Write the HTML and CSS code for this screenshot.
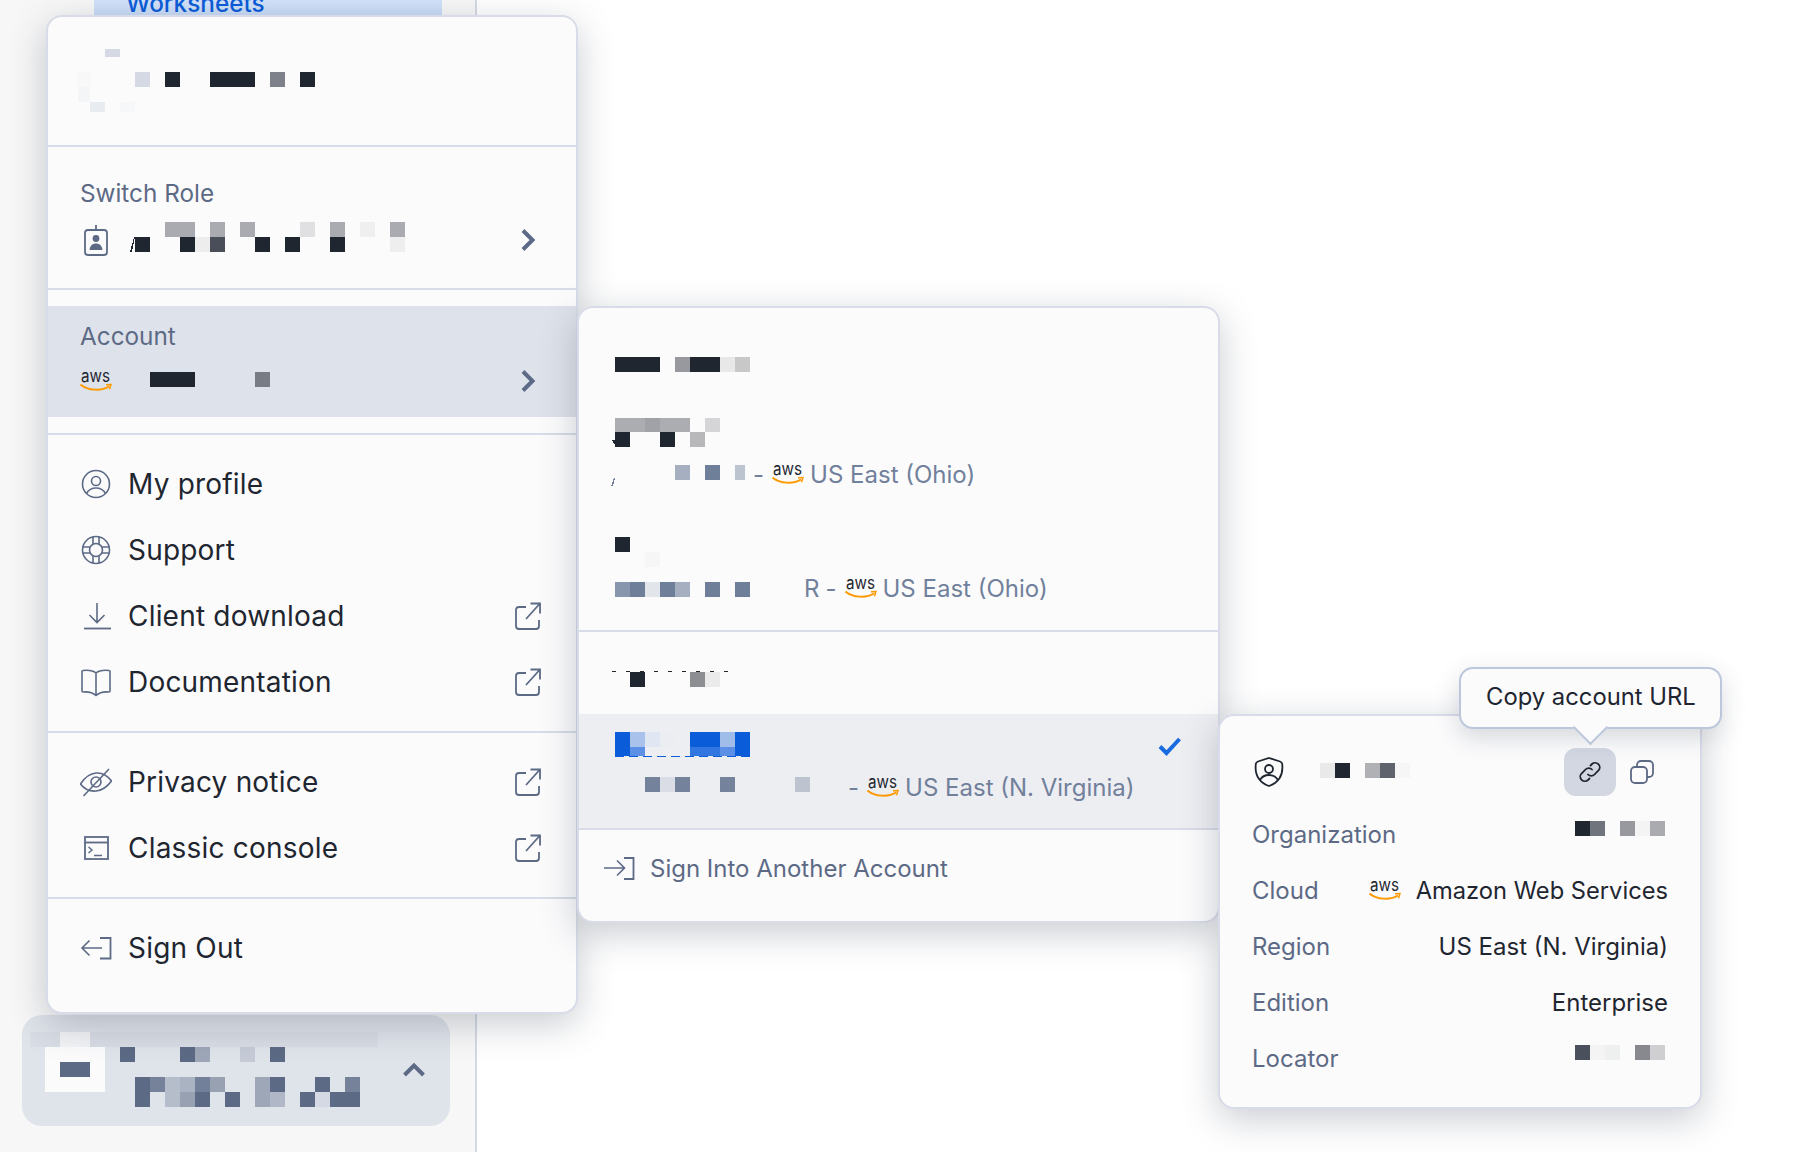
FILE: index.html
```html
<!DOCTYPE html>
<html lang="en">
<head>
    <meta charset="UTF-8">
    <meta name="viewport" content="width=device-width, initial-scale=1.0">
    <link rel="stylesheet" href="styles.css">
    <title>Account menu</title>
</head>
<body>

<svg class="defs" width="0" height="0">
    <symbol id="aws" viewBox="0 0 32 22">
        <text x="1" y="12" font-family="Inter, sans-serif" font-size="18" textLength="29" lengthAdjust="spacingAndGlyphs" fill="#1f2630">aws</text>
        <path d="M0.500 14.500C8 20.500 21 21.500 29 16.500" fill="none" stroke="#f90" stroke-width="2"/>
        <path d="M26 14.800l5-.3-1.500 4.800" fill="none" stroke="#f90" stroke-width="1.500"/>
    </symbol>
    <symbol id="external" viewBox="0 0 26 28">
        <path d="M11 5H4a3 3 0 0 0-3 3v16a3 3 0 0 0 3 3h17a3 3 0 0 0 3-3v-6" fill="none" stroke="currentColor" stroke-width="1.800"/>
        <path d="M11 17L24.500 2M15.500 1.500h9.500v10" fill="none" stroke="currentColor" stroke-width="1.800"/>
    </symbol>
    <symbol id="chevron" viewBox="0 0 16 24">
        <path d="M3 2.500L12.500 12L3 21.500" fill="none" stroke="currentColor" stroke-width="4"/>
    </symbol>
</svg>

<aside class="sidebar">
    <div class="nav-item"><span>Worksheets</span></div>
    <div class="sidebar-footer">
        <svg class="mosaic" width="348" height="75" viewBox="30 1032 348 75">
            <rect x="30" y="1032" width="30" height="15" fill="#d9dde5"/>
            <rect x="60" y="1032" width="30" height="15" fill="#f2f3f5"/>
            <rect x="90" y="1032" width="288" height="15" fill="#d8dce4"/>
            <rect x="45" y="1047" width="60" height="45" fill="#fbfbfc"/>
            <rect x="60" y="1062" width="30" height="15" fill="#5d6a85"/>
            <rect x="120" y="1047" width="15" height="15" fill="#5d6a85"/>
            <rect x="180" y="1047" width="15" height="15" fill="#5d6a85"/>
            <rect x="195" y="1047" width="15" height="15" fill="#9ea7b8"/>
            <rect x="240" y="1047" width="15" height="15" fill="#c6cbd7"/>
            <rect x="270" y="1047" width="15" height="15" fill="#5d6a85"/>
            <rect x="135" y="1077" width="15" height="30" fill="#5d6a85"/>
            <rect x="150" y="1077" width="15" height="15" fill="#76829a"/>
            <rect x="165" y="1077" width="15" height="30" fill="#b5bcca"/>
            <rect x="180" y="1077" width="15" height="15" fill="#aab3c1"/>
            <rect x="195" y="1077" width="15" height="15" fill="#72809a"/>
            <rect x="210" y="1077" width="15" height="15" fill="#98a1b2"/>
            <rect x="255" y="1077" width="15" height="30" fill="#9ea7b8"/>
            <rect x="270" y="1077" width="15" height="15" fill="#5d6a85"/>
            <rect x="315" y="1077" width="15" height="15" fill="#5d6a85"/>
            <rect x="345" y="1077" width="15" height="15" fill="#76829a"/>
            <rect x="180" y="1092" width="15" height="15" fill="#98a1b2"/>
            <rect x="195" y="1092" width="15" height="15" fill="#5d6a85"/>
            <rect x="225" y="1092" width="15" height="15" fill="#5d6a85"/>
            <rect x="270" y="1092" width="15" height="15" fill="#b0b8c7"/>
            <rect x="300" y="1092" width="15" height="15" fill="#5d6a85"/>
            <rect x="315" y="1092" width="15" height="15" fill="#d5d9e3"/>
            <rect x="330" y="1092" width="30" height="15" fill="#5d6a85"/>
        </svg>
        <svg class="footer-chevron" width="24" height="16" viewBox="0 0 24 16">
            <path d="M2.500 13L12 3.500L21.500 13" fill="none" stroke="currentColor" stroke-width="4"/>
        </svg>
    </div>
</aside>

<div class="panel main-menu">
    <section class="user-head">
        <svg class="mosaic" width="240" height="65" viewBox="75 48 240 65">
            <rect x="105" y="49" width="15" height="8" fill="#d5d9e4"/>
            <rect x="78" y="72" width="12" height="15" fill="#f8f8f9"/>
            <rect x="78" y="87" width="12" height="15" fill="#f4f5f6"/>
            <rect x="90" y="102" width="15" height="10" fill="#e8ebf0"/>
            <rect x="120" y="102" width="15" height="10" fill="#f6f7f8"/>
            <rect x="135" y="72" width="15" height="15" fill="#d5d9e4"/>
            <rect x="165" y="72" width="15" height="15" fill="#1f2630"/>
            <rect x="210" y="72" width="45" height="15" fill="#1f2630"/>
            <rect x="270" y="72" width="15" height="15" fill="#7e8189"/>
            <rect x="300" y="72" width="15" height="15" fill="#1f2630"/>
        </svg>
    </section>

    <section class="picker picker-role">
        <div class="picker-label">Switch Role</div>
        <div class="picker-value">
            <svg class="row-icon" width="32" height="32" viewBox="0 0 32 32">
                <rect x="5" y="6" width="22" height="25" rx="3" fill="none" stroke="#5d6a85" stroke-width="1.800"/>
                <path d="M16 1v5" stroke="#5d6a85" stroke-width="1.800"/>
                <circle cx="16" cy="14.500" r="3.400" fill="#5d6a85"/>
                <path d="M9.500 26c.6-4.500 3-6.500 6.500-6.500s5.900 2 6.500 6.500z" fill="#5d6a85"/>
            </svg>
            <svg class="mosaic role-mosaic" width="275" height="30" viewBox="130 222 275 30">
                <path d="M130 252l4-15h1l-3 15z" fill="#1f2630"/>
                <rect x="165" y="222" width="30" height="15" fill="#a9abb0"/>
                <rect x="210" y="222" width="15" height="15" fill="#a9abb0"/>
                <rect x="240" y="222" width="15" height="15" fill="#a9abb0"/>
                <rect x="300" y="222" width="15" height="15" fill="#e0e0e2"/>
                <rect x="330" y="222" width="15" height="15" fill="#a9abb0"/>
                <rect x="360" y="222" width="15" height="15" fill="#efefef"/>
                <rect x="390" y="222" width="15" height="15" fill="#a9abb0"/>
                <rect x="135" y="237" width="15" height="15" fill="#1f2630"/>
                <rect x="180" y="237" width="15" height="15" fill="#1f2630"/>
                <rect x="195" y="237" width="15" height="15" fill="#ededee"/>
                <rect x="210" y="237" width="15" height="15" fill="#4a4e58"/>
                <rect x="255" y="237" width="15" height="15" fill="#1f2630"/>
                <rect x="285" y="237" width="15" height="15" fill="#1f2630"/>
                <rect x="330" y="237" width="15" height="15" fill="#1f2630"/>
                <rect x="390" y="237" width="15" height="15" fill="#eeeeef"/>
            </svg>
            <svg class="chevron" width="16" height="24"><use href="#chevron"/></svg>
        </div>
    </section>

    <section class="account-section">
        <div class="picker picker-active">
            <div class="picker-label">Account</div>
            <div class="picker-value">
                <svg class="row-icon" width="32" height="22"><use href="#aws"/></svg>
                <svg class="mosaic account-mosaic" width="120" height="15" viewBox="150 372 120 15">
                    <rect x="150" y="372" width="45" height="15" fill="#1f2630"/>
                    <rect x="255" y="372" width="15" height="15" fill="#787c85"/>
                </svg>
                <svg class="chevron" width="16" height="24"><use href="#chevron"/></svg>
            </div>
        </div>
    </section>

    <section class="menu-group">
        <div class="menu-row">
            <svg class="row-icon" width="32" height="32" viewBox="0 0 32 32">
                <circle cx="16" cy="16" r="13.500" fill="none" stroke="#5d6a85" stroke-width="1.600"/>
                <circle cx="16" cy="13" r="4.500" fill="none" stroke="#5d6a85" stroke-width="1.600"/>
                <path d="M6.500 25.500c2-3.500 5.500-5.500 9.500-5.500s7.500 2 9.500 5.500" fill="none" stroke="#5d6a85" stroke-width="1.600"/>
            </svg>
            <span>My profile</span>
        </div>
        <div class="menu-row">
            <svg class="row-icon" width="32" height="32" viewBox="0 0 32 32" fill="none" stroke="#5d6a85" stroke-width="1.600">
                <circle cx="16" cy="16" r="13.500"/>
                <circle cx="16" cy="16" r="6.500"/>
                <path d="M13 3v7M19 3v7M13 22v7M19 22v7M3 13h7M3 19h7M22 13h7M22 19h7"/>
            </svg>
            <span>Support</span>
        </div>
        <div class="menu-row">
            <svg class="row-icon" width="32" height="32" viewBox="0 0 32 32" fill="none" stroke="#5d6a85" stroke-width="1.600">
                <path d="M17 3v19M9.500 15l7.500 7.500L24.500 15"/>
                <path d="M4 28.500h27" stroke-width="1.800"/>
            </svg>
            <span>Client download</span>
            <svg class="external" width="26" height="28"><use href="#external"/></svg>
        </div>
        <div class="menu-row">
            <svg class="row-icon" width="32" height="32" viewBox="0 0 32 32" fill="none" stroke="#5d6a85" stroke-width="1.600">
                <path d="M16 7c-3-2.500-8-3-13-2.500a1 1 0 0 0-1 1V25a1 1 0 0 0 1 1c5-.5 9 0 13 3.500 4-3.500 8-4 13-3.500a1 1 0 0 0 1-1V5.500a1 1 0 0 0-1-1C24 4 19 4.500 16 7zM16 7v22"/>
            </svg>
            <span>Documentation</span>
            <svg class="external" width="26" height="28"><use href="#external"/></svg>
        </div>
    </section>

    <section class="menu-group">
        <div class="menu-row">
            <svg class="row-icon" width="32" height="32" viewBox="0 0 32 32" fill="none" stroke="#5d6a85" stroke-width="1.600">
                <path d="M0.500 18C5 11 10 7.500 16 7s11 2 15.500 8C27 21 22 24.500 16 25S5 24 .5 18z"/>
                <circle cx="16" cy="16" r="5"/>
                <path d="M3.500 30L29 3"/>
            </svg>
            <span>Privacy notice</span>
            <svg class="external" width="26" height="28"><use href="#external"/></svg>
        </div>
        <div class="menu-row">
            <svg class="row-icon" width="32" height="32" viewBox="0 0 32 32" fill="none" stroke="#5d6a85" stroke-width="1.800">
                <rect x="5" y="5" width="23" height="22"/>
                <path d="M5 10.500h23"/>
                <path d="M8.500 15l3.500 3-3.500 3M14 23.500h8" stroke-width="1.500"/>
            </svg>
            <span>Classic console</span>
            <svg class="external" width="26" height="28"><use href="#external"/></svg>
        </div>
    </section>

    <section class="menu-group menu-group-last">
        <div class="menu-row">
            <svg class="row-icon" width="32" height="32" viewBox="0 0 32 32" fill="none" stroke="#5d6a85" stroke-width="1.600">
                <path d="M22 16H2M9.500 8.500L2 16l7.500 7.500"/>
                <path d="M20 6h10.500v20.500H20" stroke-width="1.800"/>
            </svg>
            <span>Sign Out</span>
        </div>
    </section>
</div>

<div class="panel account-menu">
    <section class="account-list">
        <svg class="mosaic first-org" width="135" height="15" viewBox="615 357 135 15">
            <rect x="615" y="357" width="45" height="15" fill="#1f2630"/>
            <rect x="675" y="357" width="15" height="15" fill="#97999e"/>
            <rect x="690" y="357" width="30" height="15" fill="#1f2630"/>
            <rect x="720" y="357" width="15" height="15" fill="#e8e8e9"/>
            <rect x="735" y="357" width="15" height="15" fill="#c8c8c9"/>
        </svg>
        <svg class="mosaic second-org" width="109" height="29" viewBox="611 418 109 29">
            <rect x="615" y="418" width="30" height="14" fill="#abadb1"/>
            <rect x="645" y="418" width="15" height="14" fill="#a0a2a7"/>
            <rect x="660" y="418" width="30" height="14" fill="#abadb1"/>
            <rect x="705" y="418" width="15" height="14" fill="#d5d5d7"/>
            <path d="M612 440h3v4h-1z" fill="#1f2630"/>
            <rect x="615" y="432" width="15" height="15" fill="#1f2630"/>
            <rect x="660" y="432" width="15" height="15" fill="#1f2630"/>
            <rect x="690" y="432" width="15" height="15" fill="#b8b8ba"/>
        </svg>
        <div class="cloud-line">
            <svg class="mosaic line-fragment" width="139" height="21" viewBox="611 462 139 21">
                <path d="M611 483l3-8h1l-2 8z" fill="#71809b"/>
                <rect x="675" y="462" width="15" height="15" fill="#a6afbf"/>
                <rect x="705" y="462" width="15" height="15" fill="#6f7f99"/>
                <rect x="735" y="462" width="10" height="15" fill="#bcc4d0"/>
            </svg>
            <span class="dash">-</span>
            <svg class="aws" width="32" height="22"><use href="#aws"/></svg>
            <span>US East (Ohio)</span>
        </div>
        <svg class="mosaic third-org" width="45" height="30" viewBox="615 537 45 30">
            <rect x="615" y="537" width="15" height="15" fill="#1f2630"/>
            <rect x="645" y="552" width="15" height="15" fill="#f6f6f6"/>
        </svg>
        <div class="cloud-line cloud-line-third">
            <svg class="mosaic" width="135" height="15" viewBox="615 582 135 15">
                <rect x="615" y="582" width="15" height="15" fill="#8896ad"/>
                <rect x="630" y="582" width="15" height="15" fill="#6f7f99"/>
                <rect x="645" y="582" width="15" height="15" fill="#e2e5ea"/>
                <rect x="660" y="582" width="15" height="15" fill="#6f7f99"/>
                <rect x="675" y="582" width="15" height="15" fill="#a6afbf"/>
                <rect x="705" y="582" width="15" height="15" fill="#6f7f99"/>
                <rect x="735" y="582" width="15" height="15" fill="#6f7f99"/>
            </svg>
            <span class="locator-end">R</span>
            <span class="dash">-</span>
            <svg class="aws" width="32" height="22"><use href="#aws"/></svg>
            <span>US East (Ohio)</span>
        </div>
    </section>

    <section class="account-current">
        <svg class="mosaic other-org" width="135" height="17" viewBox="612 670 135 17">
            <path d="M612 671h125" stroke="#1f2630" stroke-width="1" stroke-dasharray="4 10"/>
            <rect x="630" y="672" width="15" height="15" fill="#1f2630"/>
            <rect x="690" y="672" width="15" height="15" fill="#8c8e92"/>
            <rect x="705" y="672" width="15" height="15" fill="#ebebec"/>
        </svg>
        <div class="selected-org">
            <div>
                <svg class="mosaic" width="140" height="25" viewBox="615 732 140 25">
                    <rect x="615" y="732" width="15" height="24" fill="#0b5cd9"/>
                    <rect x="630" y="732" width="15" height="15" fill="#a8c2ec"/>
                    <rect x="630" y="747" width="15" height="9" fill="#5c90e6"/>
                    <rect x="645" y="732" width="15" height="15" fill="#e0e6f2"/>
                    <rect x="660" y="732" width="15" height="15" fill="#ebedf2"/>
                    <rect x="690" y="732" width="30" height="15" fill="#0b5cd9"/>
                    <rect x="690" y="747" width="30" height="9" fill="#3276df"/>
                    <rect x="720" y="732" width="15" height="15" fill="#a0bde9"/>
                    <rect x="720" y="747" width="15" height="9" fill="#5c90e6"/>
                    <rect x="735" y="732" width="15" height="24" fill="#0b5cd9"/>
                    <path d="M615 756.500h137" stroke="#0b5cd9" stroke-width="1" stroke-dasharray="9 5"/>
                </svg>
                <div class="cloud-line cloud-line-selected">
                    <svg class="mosaic" width="195" height="15" viewBox="615 777 195 15">
                        <rect x="645" y="777" width="15" height="15" fill="#74829b"/>
                        <rect x="660" y="777" width="15" height="15" fill="#dadde6"/>
                        <rect x="675" y="777" width="15" height="15" fill="#74829b"/>
                        <rect x="720" y="777" width="15" height="15" fill="#74829b"/>
                        <rect x="795" y="777" width="15" height="15" fill="#bdc4d0"/>
                    </svg>
                    <span class="dash dash-selected">-</span>
                    <svg class="aws" width="32" height="22"><use href="#aws"/></svg>
                    <span>US East (N. Virginia)</span>
                </div>
            </div>
            <svg class="check" width="24" height="20" viewBox="0 0 24 20">
                <path d="M2 10.500L8.500 17L21.500 3" fill="none" stroke="#1a6be0" stroke-width="4"/>
            </svg>
        </div>
    </section>

    <section class="sign-into">
        <svg width="32" height="24" viewBox="0 0 32 24" fill="none" stroke="#5d6a85" stroke-width="1.600">
            <path d="M1 12h20M14 4.500l7.500 7.500L14 19.500"/>
            <path d="M21 2h9.500v21H21" stroke-width="1.800"/>
        </svg>
        <span>Sign Into Another Account</span>
    </section>
</div>

<div class="panel detail-card">
    <div class="detail-head">
        <svg class="shield" width="32" height="32" viewBox="0 0 32 32" fill="none" stroke="#1f2630" stroke-width="1.800">
            <path d="M16 2l11 3.500c1.500.5 2 1 2.200 2.500 1 9-1 17.500-13.200 22C3.800 25.500 1.800 17 2.800 8 3 6.500 3.500 6 5 5.500z"/>
            <circle cx="16" cy="13" r="4"/>
            <path d="M7 24c2-3.500 5-5 9-5s7 1.500 9 5"/>
        </svg>
        <svg class="mosaic head-mosaic" width="90" height="15" viewBox="1320 762 90 15">
            <rect x="1320" y="762" width="15" height="15" fill="#e9e9ea"/>
            <rect x="1335" y="762" width="15" height="15" fill="#1f2630"/>
            <rect x="1365" y="762" width="15" height="15" fill="#b0b1b5"/>
            <rect x="1380" y="762" width="15" height="15" fill="#5f636c"/>
            <rect x="1395" y="762" width="15" height="15" fill="#f6f6f6"/>
        </svg>
        <button class="icon-button">
            <svg width="24" height="24" viewBox="0 0 24 24" fill="none" stroke="#1f2630" stroke-width="1.800" stroke-linecap="round">
                <path d="M10 14.500a4.500 4.500 0 0 0 6.500 0l4-4a4.600 4.600 0 0 0-6.500-6.500l-1.500 1.500"/>
                <path d="M14 9.500a4.500 4.500 0 0 0-6.500 0l-4 4a4.600 4.600 0 0 0 6.500 6.500l1.500-1.500"/>
            </svg>
        </button>
        <svg class="copy-icon" width="24" height="24" viewBox="0 0 24 24" fill="none" stroke="#5d6a85" stroke-width="1.800">
            <rect x="1" y="7" width="16" height="16" rx="4"/>
            <path d="M7 7V5a4 4 0 0 1 4-4h8a4 4 0 0 1 4 4v8a4 4 0 0 1-4 4h-2"/>
        </svg>
    </div>
    <div class="detail-row">
        <span class="detail-label">Organization</span>
        <svg class="mosaic detail-mosaic" width="90" height="15" viewBox="1575 822 90 15">
            <rect x="1575" y="822" width="15" height="15" fill="#1f2630"/>
            <rect x="1590" y="822" width="15" height="15" fill="#70747d"/>
            <rect x="1620" y="822" width="15" height="15" fill="#97999e"/>
            <rect x="1635" y="822" width="15" height="15" fill="#f4f4f5"/>
            <rect x="1650" y="822" width="15" height="15" fill="#a9abaf"/>
        </svg>
    </div>
    <div class="detail-row">
        <span class="detail-label">Cloud</span>
        <span class="detail-cloud">
            <svg width="32" height="22"><use href="#aws"/></svg>
            <span class="cloud-name">Amazon Web Services</span>
        </span>
    </div>
    <div class="detail-row">
        <span class="detail-label">Region</span>
        <span>US East (N. Virginia)</span>
    </div>
    <div class="detail-row">
        <span class="detail-label">Edition</span>
        <span>Enterprise</span>
    </div>
    <div class="detail-row">
        <span class="detail-label">Locator</span>
        <svg class="mosaic detail-mosaic" width="90" height="15" viewBox="1575 1047 90 15">
            <rect x="1575" y="1047" width="15" height="15" fill="#4b515c"/>
            <rect x="1590" y="1047" width="15" height="15" fill="#f4f4f5"/>
            <rect x="1605" y="1047" width="15" height="15" fill="#eeefef"/>
            <rect x="1635" y="1047" width="15" height="15" fill="#87898f"/>
            <rect x="1650" y="1047" width="15" height="15" fill="#cfcfd1"/>
        </svg>
    </div>
</div>

<div class="tooltip">Copy account URL</div>

</body>
</html>
```

FILE: styles.css
```css
* {
    box-sizing: border-box;
}

body {
    margin: 0;
    height: 1152px;
    overflow: hidden;
    background-color: #fff;
    font-family: Inter, "Noto Sans", sans-serif;
    color: #1f2630;
}

.defs {
    position: absolute;
}

.mosaic {
    display: block;
    flex: none;
    shape-rendering: crispEdges;
}

/* sidebar behind the menus */
.sidebar {
    display: flex;
    flex-direction: column;
    justify-content: space-between;
    width: 477px;
    height: 1152px;
    padding: 0 25px 26px 22px;
    background-color: #f7f7f7;
    border-right: 2px solid #d5d9e4;
}

.nav-item {
    display: flex;
    align-items: flex-end;
    width: 348px;
    height: 16px;
    margin-left: 72px;
    padding-left: 32px;
    overflow: hidden;
    background: linear-gradient(#d3e3fa, #c8daf5);
    color: #0b5cd9;
    font-size: 24.300px;
    font-weight: 500;
}

.nav-item span {
    flex: none;
    line-height: 30px;
    margin-bottom: -2px;
}

.sidebar-footer {
    display: flex;
    align-items: center;
    justify-content: space-between;
    height: 111px;
    padding: 17px 24px 19px 8px;
    background-color: #dfe3ea;
    border-radius: 20px;
}

.footer-chevron {
    color: #5d6a85;
}

/* floating panels */
.panel {
    position: absolute;
    background-color: #fbfbfc;
    border: 2px solid #d8dce8;
    border-radius: 16px;
    box-shadow: 0 10px 36px rgba(40, 50, 70, 0.25);
}

.main-menu {
    left: 46px;
    top: 15px;
    width: 532px;
    height: 999px;
}

.main-menu section {
    border-bottom: 2px solid #d8dce8;
}

.user-head {
    height: 130px;
    padding: 31px 0 0 27px;
}

.picker {
    padding-top: 31px;
    height: 143px;
}

.picker-role {
    padding-top: 30px;
}

.picker-active {
    height: 111px;
    padding-top: 14px;
    background-color: #dee2ea;
}

.account-section {
    height: 145px;
    padding-top: 16px;
}

.picker-label {
    padding-left: 32px;
    color: #5d6a85;
    font-size: 24.300px;
    line-height: 32px;
}

.picker-value {
    display: flex;
    align-items: center;
    height: 40px;
    margin-top: 11px;
    padding: 0 40px 0 32px;
}

.picker-active .picker-value {
    margin-top: 9px;
}

.row-icon {
    flex: none;
}

.role-mosaic {
    margin: -6px 0 0 18px;
}

.account-mosaic {
    margin: -3px 0 0 38px;
}

.chevron {
    margin-left: auto;
    color: #5d6a85;
}

.menu-group {
    padding: 16px 0;
}

.menu-group-last {
    padding: 16px 0 0;
    border-bottom: 0 !important;
}

.menu-row {
    display: flex;
    align-items: center;
    gap: 16px;
    height: 66px;
    padding: 0 35px 0 32px;
    font-size: 28px;
    letter-spacing: 0.2px;
}

.external {
    margin-left: auto;
    color: #5d6a85;
}

/* account list panel */
.account-menu {
    left: 577px;
    top: 306px;
    width: 643px;
    height: 617px;
    z-index: 1;
}

.account-menu section {
    padding-left: 36px;
}

.account-list {
    height: 324px;
    padding-top: 49px;
    border-bottom: 2px solid #d8dce8;
}

.first-org {
    margin-bottom: 46px;
}

.second-org {
    margin-left: -4px;
}

.cloud-line {
    display: flex;
    align-items: center;
    height: 30px;
    margin: 12px 0 48px;
    color: #71809b;
    font-size: 24px;
}

.cloud-line .mosaic {
    margin-top: -9px;
}

.cloud-line .line-fragment {
    margin: 3px 0 0 -4px;
}

.cloud-line .aws {
    margin: 0 6px 0 8px;
}

.dash {
    margin-left: 3px;
}

.cloud-line-third {
    margin: 6px 0 0;
}

.cloud-line-third .mosaic {
    margin-top: 3px;
}

.locator-end {
    margin-left: 54px;
}

.cloud-line-third .dash {
    margin-left: 6px;
}

.account-current {
    height: 198px;
    padding-top: 38px;
    padding-left: 0 !important;
    border-bottom: 2px solid #d8dce8;
}

.other-org {
    margin-left: 33px;
    margin-bottom: 27px;
}

.selected-org {
    display: flex;
    justify-content: space-between;
    height: 114px;
    padding: 18px 36px 0 36px;
    background-color: #edeef2;
}

.cloud-line-selected {
    margin: 15px 0 0;
}

.cloud-line-selected .mosaic {
    margin-top: -5px;
}

.dash-selected {
    margin-left: 38px;
}

.check {
    margin-top: 4px;
}

.sign-into {
    display: flex;
    align-items: center;
    gap: 15px;
    height: 76px;
    padding-left: 24px !important;
    color: #5d6a85;
    font-size: 24px;
}

/* account details card */
.detail-card {
    left: 1218px;
    top: 714px;
    width: 484px;
    height: 395px;
    padding: 32px 32px 0;
    font-size: 24px;
    z-index: 2;
}

.detail-head {
    display: flex;
    align-items: center;
    height: 48px;
    margin-bottom: 10px;
}

.shield {
    margin-left: 1px;
}

.head-mosaic {
    margin-left: 35px;
    margin-top: -4px;
}

.icon-button {
    display: flex;
    align-items: center;
    justify-content: center;
    width: 52px;
    height: 48px;
    margin-left: auto;
    padding: 0;
    background-color: #d2d7e2;
    border: 0;
    border-radius: 12px;
}

.copy-icon {
    margin: 0 14px 0 14px;
}

.detail-row {
    display: flex;
    align-items: center;
    justify-content: space-between;
    height: 56px;
}

.detail-label {
    color: #5d6a85;
}

.detail-mosaic {
    margin: -12px 3px 0 0;
}

.detail-cloud {
    display: flex;
    align-items: center;
    gap: 15px;
}

.cloud-name {
    font-size: 23.700px;
}

/* tooltip over the link button */
.tooltip {
    position: absolute;
    left: 1459px;
    top: 667px;
    width: 263px;
    height: 62px;
    padding-left: 25px;
    background-color: #fbfbfc;
    border: 2px solid #bcc7dc;
    border-radius: 14px;
    font-size: 23.800px;
    line-height: 56px;
    box-shadow: 0 8px 24px rgba(40, 50, 70, 0.18);
    z-index: 3;
}

.tooltip::after {
    content: "";
    position: absolute;
    left: 117px;
    bottom: -13px;
    width: 23px;
    height: 23px;
    background-color: #fbfbfc;
    border-right: 2px solid #bcc7dc;
    border-bottom: 2px solid #bcc7dc;
    transform: rotate(45deg);
}
```
